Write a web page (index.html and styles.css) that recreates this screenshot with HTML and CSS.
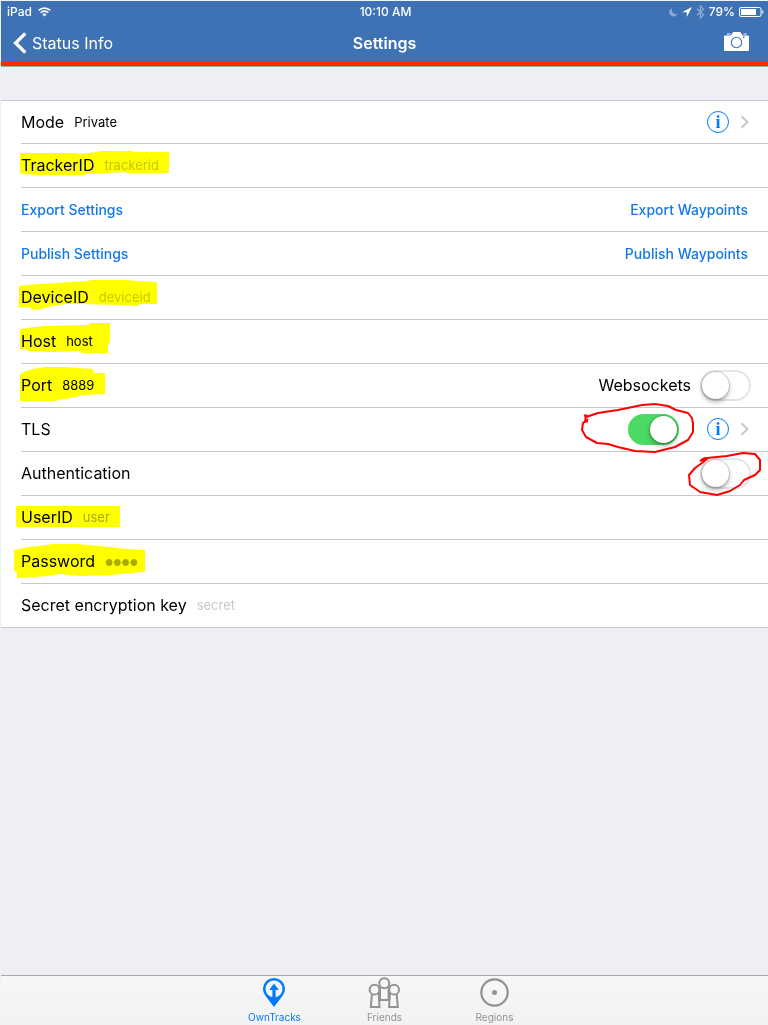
FILE: index.html
```html
<!DOCTYPE html>
<html lang="en">

<head>
  <meta charset="UTF-8" />
  <meta name="viewport" content="width=device-width, initial-scale=1.0" />
  <title>Settings</title>
  <link rel="stylesheet" href="styles.css">
</head>

<body>
  <header>
    <div class="status-bar">
      <div class="status-left">
        <span>iPad</span>
        <svg width="13" height="10" viewBox="0 0 13 10" fill="none" stroke="#fff" stroke-width="1.6">
          <path d="M0.7 3.4a8.4 8.4 0 0 1 11.6 0M2.7 5.7a5.4 5.4 0 0 1 7.6 0" />
          <path d="M6.5 9.6L4.4 7.4a3 3 0 0 1 4.2 0z" fill="#fff" stroke="none" />
        </svg>
      </div>
      <span class="clock">10:10 AM</span>
      <div class="status-right">
        <svg width="9" height="10" viewBox="0 0 9 10" fill="#8caad5">
          <path d="M3 1a4.4 4.4 0 1 0 5.6 6.1A4.6 4.6 0 0 1 3 1z" />
        </svg>
        <svg width="10" height="10" viewBox="0 0 10 10" fill="#fff">
          <path d="M10 0L0 5.200h4.800V10z" />
        </svg>
        <svg width="9" height="14" viewBox="0 0 9 14" fill="none" stroke="#8caad5" stroke-width="1.3">
          <path d="M1 3.8l6.4 6L4.4 13V1l3 3.2-6.4 6" />
        </svg>
        <span>79%</span>
        <svg width="25" height="10" viewBox="0 0 25 10">
          <rect x="0.5" y="0.5" width="21.5" height="9" rx="1.5" fill="none" stroke="#fff" />
          <rect x="2" y="2" width="15" height="6" fill="#fff" />
          <path d="M23.3 3v4c1.6-.6 1.6-3.4 0-4z" fill="#fff" />
        </svg>
      </div>
    </div>
    <nav>
      <a class="back" href="#">
        <svg width="14" height="22" viewBox="0 0 14 22" fill="none" stroke="#fff" stroke-width="3.4">
          <path d="M12.3 1.4L2.6 11l9.7 9.6" />
        </svg>
        Status Info
      </a>
      <h1>Settings</h1>
      <button class="camera" aria-label="Camera">
        <svg width="25" height="20" viewBox="0 0 25 20">
          <path d="M1 3.5h6l1.8-2.9q.3-.6 1-.6h6q.6 0 1 .6L18.500 3.500H24q1 0 1 1V18q0 1-1 1H1q-1 0-1-1V4.500q0-1 1-1z" fill="#fff" />
          <path d="M3 1.500h3.500v1H3zM19.500 1.500h3v1h-3z" fill="#fff" />
          <circle cx="12.500" cy="10.500" r="5.200" fill="none" stroke="#3f72b5" stroke-width="1.100" />
          <path d="M19 4.500h1.500v1.500H19z" fill="#3f72b5" />
        </svg>
      </button>
    </nav>
  </header>

  <main>
    <form class="settings">
      <div class="row">
        <span class="name">Mode</span>
        <span class="value">Private</span>
        <button type="button" class="info" aria-label="Mode info">i</button>
        <svg class="chevron" viewBox="0 0 9 14"><path d="M1.500 1.200L7.500 7l-6 5.800" /></svg>
      </div>
      <div class="row">
        <label class="name" for="trackerid">TrackerID</label>
        <input type="text" id="trackerid" placeholder="trackerid">
        <svg class="marker" viewBox="1 144 200 44">
          <path d="M20 153H77V154L88 153L97 152L101 151H133V152H169V173H126V172L107 173L85 174V175H40L23 174L20 173z" />
        </svg>
      </div>
      <div class="row actions">
        <button type="button" class="action">Export Settings</button>
        <button type="button" class="action">Export Waypoints</button>
      </div>
      <div class="row actions">
        <button type="button" class="action">Publish Settings</button>
        <button type="button" class="action">Publish Waypoints</button>
      </div>
      <div class="row">
        <label class="name" for="deviceid">DeviceID</label>
        <input type="text" id="deviceid" placeholder="deviceid">
        <svg class="marker" viewBox="1 276 200 44">
          <path d="M19 286L28 285L40 284L57 283L73 282L89 281V280H127L137 281L157 282V304H140L138 306L120 305L82 304H66L52 306L42 309L31 310V307H19z" />
        </svg>
      </div>
      <div class="row">
        <label class="name" for="host">Host</label>
        <input type="text" id="host" value="host">
        <svg class="marker" viewBox="1 320 200 44">
          <path d="M20 329L28 328L33 327L46 326L88 325L90 323H110V343L108 344V353H82L80 351L53 352L27 351V349H20z" />
        </svg>
      </div>
      <div class="row">
        <label class="name" for="port">Port</label>
        <input type="text" id="port" value="8889">
        <label class="name" for="websockets">Websockets</label>
        <input type="checkbox" class="switch" id="websockets">
        <svg class="marker" viewBox="1 364 200 44">
          <path d="M20 374L26 371L33 369L45 367H65L78 368L93 369L94 373H105V394L84 395L70 398L53 401H20z" />
        </svg>
      </div>
      <div class="row">
        <label class="name grow" for="tls">TLS</label>
        <input type="checkbox" class="switch" id="tls" checked>
        <button type="button" class="info" aria-label="TLS info">i</button>
        <svg class="chevron" viewBox="0 0 9 14"><path d="M1.500 1.200L7.500 7l-6 5.800" /></svg>
        <svg class="circled" viewBox="568 400 200 60">
          <path d="M584 415.500h3.500M585.500 416V421M584 421.500h4" />
          <path d="M586 417L598 413L618 410L642 405L655 404L668 406L676 410L688 413L692 418L693 424V432L688 440L675 447L655 452L635 451L618 447L608 444L597 443L586 437L582 430L583 423L588 419" />
        </svg>
      </div>
      <div class="row">
        <label class="name grow" for="auth">Authentication</label>
        <input type="checkbox" class="switch" id="auth">
        <svg class="circled" viewBox="568 444 200 60">
          <path d="M700 461L707 458L727 456L743 453L755 454L760 460V470L755 475L744 480L740 485L730 491L717 495L700 492L690 485L689 475L695 468L702 463L708 458" />
          <path d="M702 460.500L706 458.500" stroke-width="4" />
        </svg>
      </div>
      <div class="row">
        <label class="name" for="userid">UserID</label>
        <input type="text" id="userid" class="dim" placeholder="user">
        <svg class="marker" viewBox="1 496 200 44">
          <path d="M16 506H120V527H16z" />
        </svg>
      </div>
      <div class="row">
        <label class="name" for="password">Password</label>
        <input type="password" id="password" class="dim" placeholder="●●●●">
        <svg class="marker" viewBox="1 540 200 44">
          <path d="M14 550L19 549L28 547L38 546L54 544H78L109 547L127 549L145 550V572L130 573L110 575L80 576L60 574L45 576L35 577L17 578V572L14 571z" />
        </svg>
      </div>
      <div class="row">
        <label class="name" for="secret">Secret encryption key</label>
        <input type="text" id="secret" placeholder="secret">
      </div>
    </form>
  </main>

  <footer>
    <a class="tab active" href="#">
      <svg width="34" height="32" viewBox="1 0 34 32">
        <path d="M17 30L8.200 18.600A11 11 0 1 1 25.800 18.600z" fill="#007aff" />
        <circle cx="17" cy="12" r="8.500" fill="#f7f7f7" />
        <path d="M17 6.500l4.800 6.500h-3.200v7h3L17 24l-4.600-4h3v-7h-3.200z" fill="#007aff" />
      </svg>
      OwnTracks
    </a>
    <a class="tab" href="#">
      <svg width="34" height="32" viewBox="1 0 34 32" fill="#f7f7f7" stroke="#929292" stroke-width="2">
        <path d="M13 10v13h8.600V10" />
        <path d="M5 16L3.800 30h8.700l-.8-14zM29.600 16l1.200 14h-8.700l.8-14z" />
        <circle cx="7.500" cy="12.700" r="4.900" />
        <circle cx="27.100" cy="12.700" r="4.900" />
        <circle cx="17.300" cy="6.300" r="5" />
      </svg>
      Friends
    </a>
    <a class="tab" href="#">
      <svg width="34" height="32" viewBox="1 0 34 32">
        <circle cx="17.500" cy="15.500" r="13.200" fill="none" stroke="#929292" stroke-width="2.200" />
        <circle cx="17.500" cy="15.500" r="2.500" fill="#929292" />
      </svg>
      Regions
    </a>
  </footer>
</body>

</html>
```
FILE: styles.css
```css
/* Base */
* {
  box-sizing: border-box;
}

body {
  margin: 0;
  min-height: 100vh;
  display: flex;
  flex-direction: column;
  border-top: 1px solid #edf2fb;
  border-left: 1px solid #edf2fb;
  background-color: #efeef4;
  color: #000;
  font-family: Inter, "Liberation Sans", sans-serif;
}

button,
input {
  margin: 0;
  padding: 0;
  border: none;
  background: none;
  font-family: inherit;
}

svg {
  display: block;
  flex: none;
}

/* Header */
header {
  background-color: #3f72b5;
  border-bottom: 4px solid #ff2600;
  box-shadow: 0 1px 0 #a9a9b0;
  color: #fff;
}

.status-bar,
nav {
  display: grid;
  grid-template-columns: 1fr auto 1fr;
  align-items: center;
}

.status-bar {
  height: 21px;
  padding: 0 4px 0 6px;
  font-size: 12px;
  font-weight: 500;
}

.status-left,
.status-right {
  display: flex;
  align-items: center;
  gap: 6px;
}

.status-right {
  justify-content: flex-end;
  gap: 4px;
}

nav {
  height: 40px;
  padding: 2px 12px 0;
}

.back {
  display: flex;
  align-items: center;
  gap: 5px;
  color: #fff;
  font-size: 16px;
  text-decoration: none;
}

h1 {
  margin: 0;
  font-size: 16px;
  font-weight: 600;
}

.camera {
  justify-self: end;
  padding: 0 7px 2px;
}

/* Settings list */
main {
  flex: 1;
  padding-top: 34px;
}

.settings {
  background-color: #fff;
  border-top: 1px solid #c8c7cc;
  border-bottom: 1px solid #c8c7cc;
}

.row {
  position: relative;
  display: flex;
  align-items: center;
  height: 44px;
  padding: 0 17px 2px 20px;
}

.row:first-child,
.row:last-child {
  height: 43px;
}

.row.actions {
  padding-right: 20px;
}

.row:not(:last-child)::after {
  content: "";
  position: absolute;
  left: 20px;
  right: 0;
  bottom: 0;
  height: 1px;
  background-color: #c8c7cc;
}

.name {
  font-size: 16px;
}

.grow {
  flex: 1;
}

.value,
.row input[type="text"],
.row input[type="password"] {
  flex: 1;
  min-width: 0;
  margin-left: 10px;
  font-size: 13px;
}

.row input::placeholder {
  color: #c7c7cd;
  opacity: 1;
}

.row input.dim::placeholder {
  color: #aaa;
}

.row input[type="password"]::placeholder {
  font-size: 9px;
}

.action {
  color: #1478e8;
  font-size: 14px;
  font-weight: 500;
}

.action + .action {
  margin-left: auto;
}

.info {
  width: 22px;
  height: 22px;
  border: 1px solid #007aff;
  border-radius: 50%;
  color: #007aff;
  font-family: "Liberation Serif", serif;
  font-size: 18px;
  font-weight: bold;
  line-height: 18px;
}

.chevron {
  width: 9px;
  height: 14px;
  margin: 0 2px 0 11px;
  fill: none;
  stroke: #c7c7cc;
  stroke-width: 2;
}

/* Switches */
.switch {
  appearance: none;
  width: 51px;
  height: 31px;
  margin-left: 9px;
  border: 2px solid #e5e5e5;
  border-radius: 16px;
  background-color: #fff;
}

.switch::before {
  content: "";
  display: block;
  width: 27px;
  height: 27px;
  border-radius: 50%;
  background-color: #fff;
  box-shadow: 0 0 1px 1px rgba(0, 0, 0, 0.15), 0 3px 5px rgba(0, 0, 0, 0.3);
}

.switch:checked {
  border-color: #4cd964;
  background-color: #4cd964;
}

.switch:checked::before {
  margin-left: 20px;
}

.switch + .info {
  margin-left: 28px;
}

/* Pen and highlighter marks */
.marker,
.circled {
  position: absolute;
  z-index: 1;
  overflow: visible;
  pointer-events: none;
}

.marker {
  top: 0;
  left: 0;
  width: 200px;
  height: 44px;
  fill: #ff0;
  mix-blend-mode: multiply;
}

.circled {
  top: -8px;
  right: 0;
  width: 200px;
  height: 60px;
  fill: none;
  stroke: #f00;
  stroke-width: 2;
  stroke-linejoin: round;
}

/* Tab bar */
footer {
  display: flex;
  justify-content: center;
  height: 50px;
  border-top: 1px solid #a9a9ad;
  background: linear-gradient(#f7f7f7, #f2f2f3);
}

.tab {
  display: flex;
  flex-direction: column;
  align-items: center;
  width: 110px;
  padding-top: 1px;
  color: #929292;
  font-size: 10px;
  line-height: 16px;
  text-decoration: none;
}

.tab svg {
  margin-left: 1px;
}

.tab.active {
  color: #007aff;
}
```
